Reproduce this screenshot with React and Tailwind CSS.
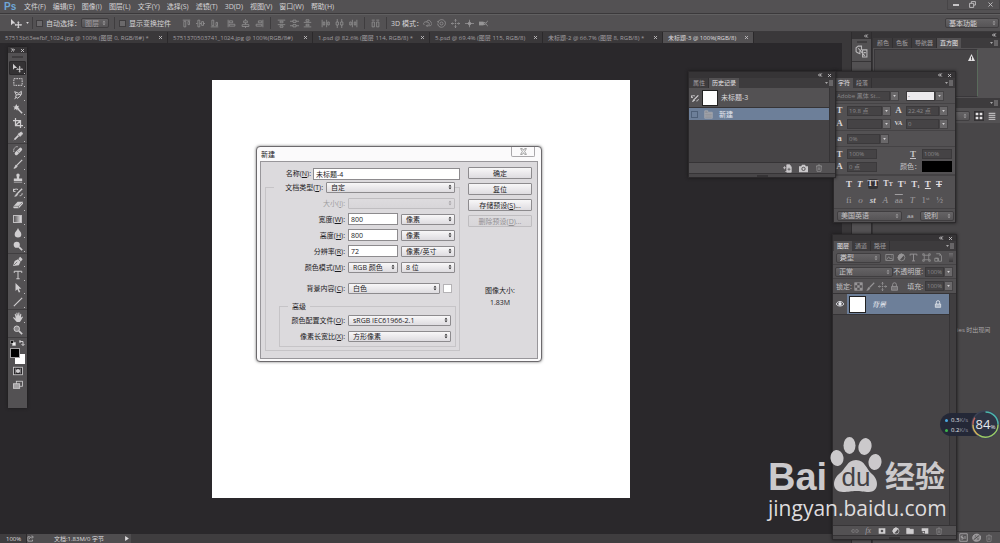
import { useState } from "react";
import { ChevronsLeft, ChevronsRight, X } from "lucide-react";

const MENUS = [
  "文件(F)",
  "编辑(E)",
  "图像(I)",
  "图层(L)",
  "文字(Y)",
  "选择(S)",
  "滤镜(T)",
  "3D(D)",
  "视图(V)",
  "窗口(W)",
  "帮助(H)",
];

const TABS = [
  { name: "57513b63eefbf_1024.jpg @ 100% (图层 0, RGB/8#) *", width: "w-[168px]" },
  { name: "5751370503741_1024.jpg @ 100%(RGB/8#)", width: "w-[145px]" },
  { name: "1.psd @ 82.6% (图层 114, RGB/8) *", width: "w-[117px]" },
  { name: "5.psd @ 69.4% (图层 115, RGB/8)", width: "w-[113px]" },
  { name: "未标题-2 @ 66.7% (图层 8, RGB/8) *", width: "w-[120px]" },
  { name: "未标题-3 @ 100%(RGB/8)", width: "w-[91px]", active: true },
];

// All line icons share a 12x12 box
const Icon = ({ children, className = "size-[11px]" }) => (
  <svg
    viewBox="0 0 12 12"
    fill="none"
    stroke="currentColor"
    strokeWidth="1"
    className={`shrink-0 ${className}`}
  >
    {children}
  </svg>
);

const ICONS = {
  move: (
    <>
      <path d="M0 1v7l2-2h3z" fill="currentColor" stroke="none" />
      <path d="M8 4v7M4.500 7.500h7" strokeWidth="1.200" />
      <path d="M7 5l1-1 1 1M7 10l1 1 1-1M5.500 6.500l-1 1 1 1M10.500 6.500l1 1-1 1" strokeWidth=".8" />
    </>
  ),
  marquee: <rect x="1" y="2" width="10" height="8" strokeWidth="1.200" strokeDasharray="2 1" />,
  lasso: <path d="M2 2l2 4 6-1V1.500L7 4 2 2zM4 6l-1 2 2 2 3-2 2-3M4 8l-2 3" strokeWidth="1.200" />,
  wand: (
    <>
      <path d="M6 6l5 5" strokeWidth="1.800" />
      <path d="M4 0l1 2.500L7.500 2 6 4l2 1.500-2.500.5L5 8 3.500 6 1 7l1-2.500L0 3h2.500z" fill="currentColor" stroke="none" />
    </>
  ),
  crop: <path d="M3 0v9h9M0 3h9v9M3 9l6-6" strokeWidth="1.500" />,
  eyedropper: (
    <>
      <path d="M2 10l4.500-4.500" strokeWidth="2" />
      <path d="M1 11l1-1" />
      <path d="M7 3l2 2M6 4l2.500 2.500L11 4c1-1 0-3-1.500-2.500z" fill="currentColor" />
    </>
  ),
  healing: (
    <>
      <path d="M4 9l5-5" strokeWidth="4" strokeLinecap="round" />
      <path d="M1 7C0 3 3 0 6 1" strokeDasharray="1.500 1" strokeWidth="1.200" />
      <path d="M5 6l2 2M7 5l1 1" stroke="#555" strokeWidth=".7" />
    </>
  ),
  brush: (
    <>
      <path d="M5 7l6-6" strokeWidth="1.500" />
      <path d="M1 11c2 0 1-3 3-4l1 1c0 2-2 3-4 3z" fill="currentColor" />
    </>
  ),
  stamp: (
    <path
      d="M4 2.500a2 2 0 014 0c0 1-.7 2-.7 4H11v3H1v-3h3.700C4.700 4.500 4 3.500 4 2.500zM1 10.500h10v1H1z"
      fill="currentColor"
      stroke="none"
    />
  ),
  history: (
    <>
      <path d="M5 8l6-6" strokeWidth="1.600" />
      <path d="M2 11c2 0 1-2 2.500-3l1 1c0 1-1.500 2-3.500 2z" fill="currentColor" />
      <path d="M0 5c1-2.500 4-3 6-2M1 2l-1 3 3 .5M8 10.500c2 0 3-1 3-3" strokeWidth="1.200" />
    </>
  ),
  eraser: (
    <>
      <path d="M0 8l5.500-6H12v2.500L7 10H1z" fill="currentColor" stroke="none" />
      <path d="M0 7.500h6.500L11.500 3M6.500 7.500V10" stroke="#555" strokeWidth=".7" />
    </>
  ),
  drop: <path d="M6 0c1 3 4 4.500 4 7.500a4 4 0 01-8 0C2 4.500 5 3 6 0z" fill="currentColor" stroke="none" />,
  dodge: (
    <>
      <circle cx="4.500" cy="4.500" r="3.700" fill="currentColor" stroke="none" />
      <path d="M7 7l4 4" strokeWidth="2" />
    </>
  ),
  pen: (
    <>
      <path d="M0 12l2-6 4-2 3 3-2 4z" fill="currentColor" stroke="none" />
      <path d="M7 3l3 3M8 1.500L11 4.500" strokeWidth="1.800" />
      <path d="M1 11l4-4" stroke="#555" strokeWidth=".8" />
    </>
  ),
  type: <path d="M1.500 3.500v-2h9v2M6 1.500v9M4 10.500h4" strokeWidth="1.200" />,
  arrow: <path d="M3 0v9.500l2.200-2L7 11.500l1.700-.8L7 7h3z" fill="currentColor" stroke="none" />,
  line: <path d="M1 11L11 1" strokeWidth="1.400" />,
  hand: (
    <path
      d="M3 6L2 2.500l1-.5 1.500 3L4 1h1.200L6 4.500 6.500.5h1.200V5L9 2l1 .5L9.500 7l1.500-1.500 1 .5-3 5-1 1H4.500L0 7l1-1 2 2z"
      fill="currentColor"
      stroke="none"
    />
  ),
  zoom: (
    <>
      <circle cx="4.500" cy="4.500" r="3.300" fill="#8d8b8d" strokeWidth="1.200" />
      <path d="M7 7l4 4" strokeWidth="2" />
    </>
  ),
  mask: (
    <>
      <rect x="0.500" y="1.500" width="11" height="9" fill="#2a282b" />
      <circle cx="6" cy="6" r="2.500" fill="currentColor" stroke="none" />
      <path d="M3 3v6M9 3v6" strokeWidth=".6" />
    </>
  ),
  screen: (
    <>
      <rect x="4" y="1.500" width="7.500" height="6" />
      <rect x="0.500" y="4.500" width="7.500" height="5.500" fill="#a3a1a3" />
    </>
  ),
  alignTop: <path d="M1 1.500h10M2.500 3v7.500h2.500V3zM8 3v4.500h2V3z" />,
  alignMiddle: <path d="M0 6h2M5 6h2M10 6h2M2.500 1.500v9H5v-9zM7.500 3.500v5h2.500v-5z" />,
  alignBottom: <path d="M1 10.500h10M2.500 1.500V9H5V1.500zM8 4.500V9h2V4.500z" />,
  alignLeft: <path d="M1.500 1v10M3 2.500v2.500h4.500V2.500zM3 7v2.500h7.500V7z" />,
  alignCenter: <path d="M6 0v2M6 5v2M6 10v2M3.500 2.500h5v2.500h-5zM1.500 7.500h9V10h-9z" />,
  alignRight: <path d="M10.500 1v10M4.500 2.500v2.500H9V2.500zM1.500 7v2.500H9V7z" />,
  distTop: <path d="M1 1.500h10M4 3v2h4V3zM1 7.500h10M4 9v2h4V9z" />,
  distMiddle: <path d="M0 3h4M8 3h4M0 9h4M8 9h4M4 1.500v3h4v-3zM4 7.500v3h4v-3z" />,
  distBottom: <path d="M1 4.500h10M4 1v2h4V1zM1 10.500h10M4 7v2h4V7z" />,
  distLeft: <path d="M1.500 1v10M3 4v4h2V4zM7.500 1v10M9 4v4h2V4z" />,
  distCenter: <path d="M3 0v4M3 8v4M9 0v4M9 8v4M1.500 4v4h3V4zM7.500 4v4h3V4z" />,
  distRight: <path d="M4.500 1v10M1 4v4h2V4zM10.500 1v10M7 4v4h2V4z" />,
  columns: <path d="M1 1.500h4M7 1.500h4M1.500 4v6.500h3V4zM7.500 4v6.500h3V4z" />,
  orbit: <path d="M2 8C-1 6 2 3 5 4c0-3 5-3 5 0 3 1 2 5-1 5H5M5 4c3 0 4 2 3 4M6 7.500L4.500 9 6 10.500" />,
  roll: (
    <>
      <circle cx="6" cy="6" r="2" />
      <path d="M2 3c2-3 7-3 9 1 1 4-2 7-5 7S1 9 1 6M0 4l2-1v2" />
    </>
  ),
  pan: <path d="M6 0v4M6 8v4M0 6h4M8 6h4M4.500 2L6 .5 7.500 2M4.500 10L6 11.500 7.500 10M2 4.500L.5 6 2 7.500M10 4.500L11.500 6 10 7.500M6 5v2M5 6h2" />,
  slide: (
    <>
      <path d="M6 1v10M0 6h12" />
      <path d="M6 3.500L8.500 6 6 8.500 3.500 6z" fill="currentColor" />
    </>
  ),
  camera3d: (
    <>
      <path d="M0 4h6v4H0z" fill="currentColor" />
      <path d="M6 6l2-2v4zM12 2L9 6l3 4" />
    </>
  ),
  trash: <path d="M1.500 3h9M4.500 3V1.500h3V3M2.500 3l.5 8h6l.5-8M5 5v4M7 5v4" />,
  camera: (
    <>
      <path d="M0 3h3l1-2h4l1 2h3v8H0z" fill="currentColor" stroke="none" />
      <circle cx="6" cy="6.500" r="2.200" stroke="#535153" strokeWidth="1.300" />
    </>
  ),
  newDoc: (
    <>
      <path d="M5 1h4l2 3v7H5z" fill="currentColor" />
      <path d="M0 5h4M2 3v4M3 10h2" />
      <path d="M8 5v4M6 7h4" stroke="#535153" />
    </>
  ),
  folder: <path d="M1 2h4l1 1.500h5V10H1z" fill="currentColor" />,
  newLayer: (
    <>
      <path d="M1 2h10v8H6V6H1z" fill="currentColor" stroke="none" />
      <path d="M1 7h4v3z" fill="currentColor" stroke="none" />
    </>
  ),
  adjust: (
    <>
      <circle cx="6" cy="6" r="4.500" />
      <path d="M9 2.500a4.500 4.500 0 00-6 7z" fill="currentColor" />
    </>
  ),
  addMask: <path d="M1 2h10v8H1zM6 4a2 2 0 100 4 2 2 0 000-4z" fill="currentColor" stroke="none" fillRule="evenodd" />,
  link: <path d="M5 4H3a2 2 0 000 4h2M7 4h2a2 2 0 010 4H7M4 6h4" />,
  image: <path d="M1 2h10v8H1zM2 9l3-4 2 3 1.500-1.500L10 9M8 4h1" />,
  shape: <path d="M3 3h6v6H3zM1 1h2v2H1zM9 1h2v2H9zM1 9h2v2H1zM9 9h2v2H9z" />,
  smart: <path d="M3 1h5l2 3v7H6V7H2M1 7h4v4H1zM8 1v3" />,
  lock: (
    <>
      <path d="M3.500 6V3.500a2.500 2.500 0 015 0V6" strokeWidth="1.200" />
      <path d="M2 6h8v5H2z" fill="currentColor" fillOpacity=".5" />
    </>
  ),
  checker: (
    <>
      <rect x="1" y="1" width="10" height="10" />
      <path d="M1 1h3.300v3.300H1zM7.600 1H11v3.300H7.600zM4.300 4.300h3.300v3.300H4.300zM1 7.600h3.300V11H1zM7.600 7.600H11V11H7.600z" fill="currentColor" stroke="none" />
    </>
  ),
  eye: (
    <>
      <path d="M0 6c3-5 9-5 12 0-3 4-9 4-12 0z" strokeWidth="1.300" />
      <circle cx="6" cy="5.800" r="2" fill="currentColor" />
    </>
  ),
  search: (
    <>
      <circle cx="7" cy="5" r="3.800" strokeWidth="1.500" />
      <path d="M4 8l-3.500 3.500" strokeWidth="2" />
    </>
  ),
  actions: (
    <>
      <path d="M1 6V2.500L3 1h3v3L4.500 6v2L2 7z" />
      <path d="M3 3l6 7M7 4.500h4V11H7zM8 7h2" />
    </>
  ),
  palette: (
    <>
      <path d="M1 6C1 1 9 0 11 4c2 4-1 7-5 7S1 9 1 6z" fill="currentColor" fillOpacity=".6" />
      <path d="M2 9l8-6M4 4h1M7 8h2" stroke="#3a383a" />
    </>
  ),
  si: <path d="M1 1h10v10H1zM5.500 4H3v2h2.500v2H3M8 4v4" />,
  share: <path d="M5 3H1.500v7.500h8V8M4 7c0-3 2-3.500 5-3.500M8 1l3 2.500L8 6" />,
};

const TOOL_GROUPS = [
  { height: "h-[83px]", tools: ["move", "marquee", "lasso", "wand", "crop", "eyedropper"] },
  { height: "h-[110px]", tools: ["healing", "brush", "stamp", "history", "eraser", "gradient", "drop", "dodge"] },
  { height: "h-[56px]", tools: ["pen", "type", "arrow", "line"] },
  { height: "h-[28px]", tools: ["hand", "zoom"] },
];

const UpDown = ({ className = "" }) => (
  <svg viewBox="0 0 4 6" fill="currentColor" className={`pointer-events-none absolute top-1/2 right-[3px] h-[5px] w-[4px] -translate-y-1/2 ${className}`}>
    <path d="M2 0l1.700 2.300H.3zM2 6L.3 3.700h3.400z" />
  </svg>
);

const DarkSelect = ({ label, value, className = "" }) => (
  <span className={`relative block h-[10px] shrink-0 ${className}`}>
    <select
      aria-label={label}
      className="block size-full appearance-none rounded-[2px] border border-[#403e40] bg-linear-to-b from-[#656365] to-[#565456] pl-[3px] leading-none text-inherit"
    >
      <option>{value}</option>
    </select>
    <UpDown className="text-[#9a989a]" />
  </span>
);

const LightSelect = ({ id, label, value, disabled, className = "" }) => (
  <span className={`relative block h-[11px] shrink-0 ${className}`}>
    <select
      id={id}
      aria-label={label}
      disabled={disabled}
      className="block size-full appearance-none rounded-[1px] border border-[#8d8b8e] bg-linear-to-b from-[#f8f7f8] to-[#dedce0] pl-1 leading-none text-[#1c1b1d] disabled:border-[#bfbdc0] disabled:from-[#dddbde] disabled:to-[#d8d6d9]"
    >
      <option>{value}</option>
    </select>
    <UpDown className={disabled ? "text-[#a4a2a5]" : "text-[#2c2b2d]"} />
  </span>
);

// Text box with a drop-down button on its right
const Combo = ({ label, value, className = "", light, arrow = true }) => (
  <span className={`flex h-[10px] shrink-0 text-[6px] ${className}`}>
    <input
      aria-label={label}
      defaultValue={value}
      className={`block h-full w-0 flex-1 border border-[#3b393b] px-px leading-none ${light ? "bg-[#eceaed] text-[#555]" : "bg-[#454345] text-[#8a888a]"}`}
    />
    {arrow && (
      <button aria-label={`${label} 选项`} className="flex w-[9px] items-center justify-center border border-[#454345] bg-[#6a686a]">
        <svg viewBox="0 0 4 3" className="h-[2px] w-[3px] fill-[#d2d0d2]">
          <path d="M0 0h4L2 3z" />
        </svg>
      </button>
    )}
  </span>
);

const Panel = ({ tabs, active, className, children }) => (
  <section
    className={`absolute flex flex-col border border-[#2b292b] bg-[#535153] text-[7px] leading-none text-[#c4c2c4] shadow-[0_0_3px_#1a181a] ${className}`}
  >
    <PanelTop />
    <PanelTabs tabs={tabs} active={active} />
    {children}
  </section>
);

const PanelTop = ({ close = true }) => (
  <div className="flex h-[6px] shrink-0 items-center justify-end gap-1 bg-[#363436] pr-[3px] text-[#c9c7c9]">
    <ChevronsLeft size={6} strokeWidth={4} />
    {close && <X size={5} strokeWidth={4} />}
  </div>
);

const PanelTabs = ({ tabs, active }) => (
  <div className="flex h-[10px] shrink-0 items-stretch bg-[#3d3b3d] pl-px text-[6px]">
    {tabs.map((tab) => (
      <button
        key={tab}
        className={`px-[3px] leading-none whitespace-nowrap ${tab === active ? "bg-[#535153] text-[#e6e4e6]" : "border-r border-[#323032] text-[#a09ea0]"}`}
      >
        {tab}
      </button>
    ))}
    <svg viewBox="0 0 8 6" className="mr-[2px] ml-auto h-[6px] w-[8px] self-center" stroke="#a9a7a9">
      <path d="M0 2h3L1.500 4z" fill="#a9a7a9" stroke="none" />
      <path d="M4 1h4M4 3h4M4 5h4" strokeWidth=".8" />
    </svg>
  </div>
);

const Sep = () => <span className="h-3 w-px shrink-0 bg-[#3f3d3f]" />;

const IconRow = ({ names, className = "" }) => (
  <div className={`flex items-center text-[#979597] ${className}`}>
    {names.map((name) => (
      <button key={name} aria-label={name} className="block">
        <Icon className="size-[9px]">{ICONS[name]}</Icon>
      </button>
    ))}
  </div>
);

const Header = () => (
  <header className="shrink-0 bg-[#535153] text-[7px] leading-none text-[#d6d4d6]">
    <div className="flex h-[14px] items-center border-b border-[#3b393b]">
      <span className="w-[24px] pl-1 font-['Liberation_Sans',sans-serif] text-[10px] font-bold text-[#6fa7d6]">Ps</span>
      <nav className="flex gap-[7px]">
        {MENUS.map((item) => (
          <button key={item} className="leading-none whitespace-nowrap">
            {item}
          </button>
        ))}
      </nav>
      <div className="ml-auto flex h-[10px] w-[53px] items-center justify-around self-start border border-t-0 border-[#474547] text-[#c6c4c6]">
        <button aria-label="最小化" className="h-[2px] w-[6px] bg-[#c6c4c6]" />
        <button aria-label="还原">
          <Icon className="size-[7px]">
            <path d="M4 4V1h7v6H8M1 4h7v7H1z" strokeWidth="1.500" />
          </Icon>
        </button>
        <button aria-label="关闭">
          <X size={7} strokeWidth={3} />
        </button>
      </div>
    </div>

    <div className="flex h-[18px] items-center border-y border-t-[#616061] border-b-[#3b393b]">
      <span className="flex w-[32px] items-center gap-1 pl-[11px]">
        <Icon>{ICONS.move}</Icon>
        <svg viewBox="0 0 4 3" className="h-[2px] w-[3px] fill-current">
          <path d="M0 0h4L2 3z" />
        </svg>
      </span>
      <Sep />
      <label className="ml-[3px] flex w-[45px] items-center gap-[3px] whitespace-nowrap">
        <input type="checkbox" className="size-[7px] appearance-none border border-[#3f3d3f] bg-[#6b696b]" />
        自动选择：
      </label>
      <DarkSelect label="自动选择" value="图层" className="w-[28px] text-[#a09ea0]" />
      <span className="w-[5px]" />
      <Sep />
      <label className="ml-[4px] flex w-[57px] items-center gap-[3px] whitespace-nowrap">
        <input type="checkbox" className="size-[7px] appearance-none border border-[#3f3d3f] bg-[#6b696b]" />
        显示变换控件
      </label>
      <IconRow names={["alignTop", "alignMiddle", "alignBottom"]} className="ml-[6px] gap-[5px]" />
      <IconRow names={["alignLeft", "alignCenter", "alignRight"]} className="mr-[6px] ml-[8px] gap-[5px]" />
      <Sep />
      <IconRow names={["distTop", "distMiddle", "distBottom"]} className="ml-[6px] gap-[4px]" />
      <IconRow names={["distLeft", "distCenter", "distRight"]} className="mr-[6px] ml-[9px] gap-[5px]" />
      <Sep />
      <IconRow names={["columns"]} className="mx-[6px]" />
      <Sep />
      <span className="ml-[4px] w-[32px] whitespace-nowrap">3D 模式：</span>
      <IconRow names={["orbit", "roll", "pan", "slide", "camera3d"]} className="gap-[5px]" />
      <DarkSelect label="工作区" value="基本功能" className="mr-px ml-auto w-[54px]" />
    </div>
  </header>
);

const DocumentTabs = () => (
  <div className="flex h-[11px] shrink-0 items-stretch bg-[#3a383a] text-[6px] leading-none">
    {TABS.map((tab) => (
      <div
        key={tab.name}
        className={`flex shrink-0 items-center justify-between border-r border-[#2b292b] pr-[4px] pl-[5px] ${tab.width} ${tab.active ? "bg-[#535153] text-[#dddbdd]" : "text-[#a19fa1]"}`}
      >
        <button className="leading-none whitespace-nowrap">{tab.name}</button>
        <button aria-label="关闭标签" className="text-[#c6c4c6]">
          <X size={5} strokeWidth={4} />
        </button>
      </div>
    ))}
  </div>
);

const Toolbox = () => {
  const [tool, setTool] = useState("move");

  return (
    <aside className="absolute top-[4px] left-[8px] flex h-[361px] w-[19px] flex-col bg-[#535153] text-[#d0ced0] shadow-[0_0_3px_#1a181a]">
      <div className="flex h-[6px] items-center justify-around bg-[#363436]">
        <ChevronsRight size={6} strokeWidth={4} />
        <X size={5} strokeWidth={4} />
      </div>
      <span className="mx-auto my-[3px] h-[2px] w-[11px] bg-[#3f3d3f]" />
      {TOOL_GROUPS.map((group) => (
        <div key={group.height} className={`flex shrink-0 flex-col border-b border-[#403e40] px-px ${group.height}`}>
          {group.tools.map((name) => (
            <button
              key={name}
              aria-label={name}
              onClick={() => setTool(name)}
              className={`relative flex flex-1 items-center justify-center rounded-[2px] ${name === tool ? "bg-[#343234] ring-1 ring-[#2b292b] ring-inset" : ""}`}
            >
              {name === "gradient" ? (
                <span className="h-[8px] w-[9px] border border-[#c0bec0] bg-linear-to-r from-[#5a585a] to-[#e0dee0]" />
              ) : (
                <Icon className="size-[10px]">{ICONS[name]}</Icon>
              )}
              {name !== "zoom" && <span className="absolute right-px bottom-px size-px bg-[#bcbabc]" />}
            </button>
          ))}
        </div>
      ))}
      <div className="flex h-[10px] shrink-0 items-center justify-around">
        <Icon className="size-[6px]">
          <path d="M1 1h6v6H1z" fill="#111" />
          <path d="M7 5h4v6H5V7" fill="#eee" />
        </Icon>
        <Icon className="size-[6px]">
          <path d="M1 3h7v8M3 0L0 3l3 3M5 8l3 3 3-3" strokeWidth="2" />
        </Icon>
      </div>
      {/* Foreground and background colours overlap */}
      <div className="relative mx-[2px] h-[17px] shrink-0">
        <span className="absolute right-0 bottom-px size-[10px] bg-white" />
        <span className="absolute top-0 left-0 size-[10px] border border-[#a3a1a3] bg-black" />
      </div>
      <div className="flex flex-col items-center gap-[4px] pt-px">
        <Icon className="size-[10px]">{ICONS.mask}</Icon>
        <Icon className="size-[10px]">{ICONS.screen}</Icon>
      </div>
    </aside>
  );
};

const Row = ({ id, text, hotkey, muted, wide = "w-[79px]", children }) => (
  <div className="flex h-4 items-center gap-[3px]">
    <label htmlFor={id} className={`shrink-0 text-right whitespace-nowrap ${wide} ${muted ? "text-[#a09ea1]" : ""}`}>
      {text}(<u>{hotkey}</u>):
    </label>
    {children}
  </div>
);

const LightInput = ({ id, value, className }) => (
  <input
    id={id}
    defaultValue={value}
    className={`block h-[12px] border border-[#8d8b8e] bg-white px-[2px] leading-none text-[#1c1b1d] ${className}`}
  />
);

const LightButton = ({ children, className = "", disabled }) => (
  <button
    type="button"
    disabled={disabled}
    className={`h-[12px] rounded-[1px] border border-[#8d8b8e] bg-linear-to-b from-[#f8f7f8] to-[#dedce0] leading-none disabled:border-[#bfbdc0] disabled:from-[#dddbde] disabled:to-[#d8d6d9] disabled:text-[#929093] ${className}`}
  >
    {children}
  </button>
);

const NewDocumentDialog = () => (
  <div
    role="dialog"
    aria-label="新建"
    className="absolute top-[146px] left-[256px] flex w-[286px] flex-col rounded-[4px] border border-[#6c6a6d] bg-[#fbfafb] px-[3px] pb-[2px] text-[7px] leading-none text-[#1c1b1d] shadow-[0_0_3px_#777]"
  >
    <div className="flex h-[14px] items-center justify-between pr-[3px] pl-px">
      <h2>新建</h2>
      <button
        aria-label="关闭"
        className="flex h-[10px] w-[24px] items-center justify-center self-start rounded-b-[2px] border border-t-0 border-[#a9a7aa] text-[#666]"
      >
        <Icon className="size-[7px]">
          <path d="M1 1h3l2 3 2-3h3L8 6l3 5H8L6 8l-2 3H1l3-5z" />
        </Icon>
      </button>
    </div>
    <form className="flex h-[198px] gap-2 border border-[#98969a] bg-[#dcdadd] pt-[5px] pr-[5px] pl-[4px]">
      <div className="w-[195px] shrink-0">
        <div className="flex h-[13px] items-center justify-end gap-[2px]">
          <label htmlFor="doc-name">
            名称(<u>N</u>):
          </label>
          <LightInput id="doc-name" value="未标题-4" className="w-[147px]" />
        </div>
        <fieldset className="w-full min-w-0 border border-[#c6c4c7] pb-[3px]">
          <legend className="mb-px ml-[8px] flex h-[14px] w-[181px] items-center justify-end gap-[3px]">
            <label htmlFor="doc-type">
              文档类型(<u>T</u>):
            </label>
            <LightSelect id="doc-type" value="自定" className="w-[129px]" />
          </legend>
          <Row id="doc-size" text="大小" hotkey="I" muted>
            <LightSelect id="doc-size" value="" disabled className="w-[107px]" />
          </Row>
          <Row id="doc-width" text="宽度" hotkey="W">
            <LightInput id="doc-width" value="800" className="w-[50px]" />
            <LightSelect label="宽度单位" value="像素" className="w-[54px]" />
          </Row>
          <Row id="doc-height" text="高度" hotkey="H">
            <LightInput id="doc-height" value="800" className="w-[50px]" />
            <LightSelect label="高度单位" value="像素" className="w-[54px]" />
          </Row>
          <Row id="doc-res" text="分辨率" hotkey="R">
            <LightInput id="doc-res" value="72" className="w-[50px]" />
            <LightSelect label="分辨率单位" value="像素/英寸" className="w-[54px]" />
          </Row>
          <Row id="doc-mode" text="颜色模式" hotkey="M">
            <LightSelect id="doc-mode" value="RGB 颜色" className="w-[50px]" />
            <LightSelect label="位深度" value="8 位" className="w-[54px]" />
          </Row>
          <div className="mt-[5px]">
            <Row id="doc-bg" text="背景内容" hotkey="C">
              <LightSelect id="doc-bg" value="白色" className="w-[92px]" />
              <button type="button" aria-label="背景颜色" className="size-[9px] border border-[#b5b3b6] bg-white" />
            </Row>
          </div>
          <fieldset className="mt-[6px] mr-[3px] ml-[13px] min-w-0 border border-[#c6c4c7] pb-[2px]">
            <legend className="mb-px ml-2 px-1 py-px">高级</legend>
            <Row id="doc-profile" text="颜色配置文件" hotkey="O" wide="w-[65px]">
              <LightSelect id="doc-profile" value="sRGB IEC61966-2.1" className="w-[103px]" />
            </Row>
            <Row id="doc-ratio" text="像素长宽比" hotkey="X" wide="w-[65px]">
              <LightSelect id="doc-ratio" value="方形像素" className="w-[103px]" />
            </Row>
          </fieldset>
        </fieldset>
      </div>
      <div className="flex flex-1 flex-col gap-[4px]">
        <LightButton className="border-[#5d5b5e]">确定</LightButton>
        <LightButton>复位</LightButton>
        <LightButton>
          存储预设(<u>S</u>)...
        </LightButton>
        <LightButton disabled>
          删除预设(<u>D</u>)...
        </LightButton>
        <p className="mt-[54px] text-center leading-[12px]">
          图像大小:
          <br />
          1.83M
        </p>
      </div>
    </form>
  </div>
);

const HistoryPanel = () => (
  <Panel tabs={["属性", "历史记录"]} active="历史记录" className="top-[71px] right-[164px] h-[107px] w-[148px]">
    <div className="flex flex-1 bg-[#464446]">
      <ul className="flex-1">
        <li className="flex h-[20px] items-center gap-[3px] border-b border-[#363436] bg-[#535153] pl-[2px] text-[#dddbdd]">
          <Icon className="size-[8px]">{ICONS.history}</Icon>
          <span className="size-[16px] border border-[#222] bg-white" />
          未标题-3
        </li>
        <li className="flex h-[12px] items-center bg-[#6d7f99] text-[#e6e8ee]">
          <span className="ml-[2px] size-[7px] border border-[#4f6078]" />
          <Icon className="mr-[6px] ml-[6px] size-[9px] text-[#a9abb1]">
            <path d="M1 11V1h4v2h6v8zM1 5h10M1 8h10" fill="#8f9198" />
          </Icon>
          新建
        </li>
      </ul>
      <div className="w-[6px] border-l border-[#363436] bg-[#403e40]" />
    </div>
    <div className="flex h-[11px] shrink-0 items-center justify-end gap-[7px] border-t border-[#363436] pr-[12px] text-[#c9c7c9]">
      <Icon className="size-[9px]">{ICONS.newDoc}</Icon>
      <Icon className="size-[9px]">{ICONS.camera}</Icon>
      <Icon className="size-[8px] text-[#9c9a9c]">{ICONS.trash}</Icon>
    </div>
    <Grip />
  </Panel>
);

const Grip = () => (
  <div className="flex h-[4px] shrink-0 items-center justify-center border-t border-[#363436] bg-[#484648]">
    <span className="h-[2px] w-[11px] bg-[#363436]" />
  </div>
);

const CHAR_ROW = "flex shrink-0 items-center border-b border-[#454345] pl-px";

const CharacterPanel = () => (
  <Panel tabs={["字符", "段落"]} active="字符" className="top-[71px] right-[44px] h-[152px] w-[123px]">
    <div className={`${CHAR_ROW} h-[16px] gap-[7px]`}>
      <Combo label="字体" value="Adobe 黑体 St..." className="w-[64px]" />
      <Combo label="字形" value="-" light className="w-[38px]" />
    </div>
    <div className={`${CHAR_ROW} h-[27px] flex-wrap content-center gap-x-[3px] gap-y-[3px]`}>
      <Glyph>T</Glyph>
      <Combo label="字号" value="19.8 点" className="w-[44px]" />
      <Glyph>A</Glyph>
      <Combo label="行距" value="22.42 点" className="w-[42px]" />
      <Glyph>A</Glyph>
      <Combo label="字距微调" value="" className="w-[44px]" />
      <Glyph small>VA</Glyph>
      <Combo label="字距" value="0" className="w-[42px]" />
    </div>
    <div className={`${CHAR_ROW} h-[16px] gap-[3px]`}>
      <Glyph>a</Glyph>
      <Combo label="比例间距" value="0%" className="w-[42px]" />
    </div>
    <div className={`${CHAR_ROW} h-[28px] flex-wrap content-center gap-x-[3px] gap-y-[2px]`}>
      <Glyph>T</Glyph>
      <Combo label="垂直缩放" value="100%" arrow={false} className="w-[30px]" />
      <span className="w-[39px] pr-[3px] text-right font-['Liberation_Serif',serif] text-[9px] font-bold underline">T</span>
      <Combo label="水平缩放" value="100%" arrow={false} className="w-[30px]" />
      <Glyph>A</Glyph>
      <Combo label="基线偏移" value="0 点" arrow={false} className="w-[30px]" />
      <span className="w-[39px] pl-[20px] whitespace-nowrap">颜色：</span>
      <button aria-label="文字颜色" className="h-[11px] w-[30px] bg-black" />
    </div>
    <div className="flex h-[17px] shrink-0 items-center justify-between border-t border-[#454345] pr-[13px] pl-[12px] font-['Liberation_Serif',serif] text-[9px] font-bold text-[#e0dee0]">
      <span>T</span>
      <span className="italic">T</span>
      <span className="rounded-[2px] bg-[#343234] py-px text-[8px]">TT</span>
      <span className="text-[8px]">
        T<span className="text-[6px]">T</span>
      </span>
      <span>
        T<sup className="text-[5px]">1</sup>
      </span>
      <span>
        T<sub className="text-[5px]">1</sub>
      </span>
      <span className="underline">T</span>
      <span className="line-through">T</span>
    </div>
    <div className="flex h-[17px] shrink-0 items-center justify-between border-b border-[#454345] pr-[12px] pl-[12px] font-['Liberation_Serif',serif] text-[9px] text-[#a09ea0]">
      <span>fi</span>
      <span className="italic">o</span>
      <span className="font-bold text-[#d0ced0] italic">st</span>
      <span className="italic">A</span>
      <span className="overline">aa</span>
      <span className="italic">T</span>
      <span>
        1<sup className="text-[5px]">st</sup>
      </span>
      <span>½</span>
    </div>
    <div className="flex flex-1 items-center gap-[5px] pl-[3px]">
      <DarkSelect label="语言" value="美国英语" className="w-[65px]" />
      <span className="w-[8px] text-[6px]">aa</span>
      <DarkSelect label="消除锯齿" value="锐利" className="w-[34px]" />
    </div>
  </Panel>
);

const Glyph = ({ children, small }) => (
  <span
    className={`w-[9px] shrink-0 text-center font-['Liberation_Serif',serif] leading-[9px] font-bold text-[#d6d4d6] ${small ? "text-[6px]" : "text-[9px]"}`}
  >
    {children}
  </span>
);

const LayersPanel = () => (
  <Panel tabs={["图层", "通道", "路径"]} active="图层" className="top-[234px] right-[43px] bottom-[3px] w-[125px]">
    <div className="flex h-[14px] shrink-0 items-center border-b border-[#454345] pr-[3px] pl-[3px]">
      <span className="relative">
        <DarkSelect label="图层筛选" value="　类型" className="w-[45px]" />
        <Icon className="pointer-events-none absolute top-[2px] left-[4px] size-[6px]">{ICONS.search}</Icon>
      </span>
      <IconRow names={["image", "adjust", "type", "shape", "smart"]} className="ml-[2px] flex-1 justify-around pr-1" />
      <span className="h-[9px] w-[4px] bg-linear-to-b from-[#6f6d6f] to-[#3b393b]" />
    </div>
    <div className="flex h-[14px] shrink-0 items-center border-b border-[#454345] pr-[3px] pl-[2px]">
      <DarkSelect label="混合模式" value="正常" className="w-[58px]" />
      <span className="ml-auto whitespace-nowrap">不透明度:</span>
      <Combo label="不透明度" value="100%" className="ml-[2px] w-[28px]" />
    </div>
    <div className="flex h-[14px] shrink-0 items-center pr-[3px] pl-[3px]">
      <span className="w-[18px] whitespace-nowrap">锁定:</span>
      <IconRow names={["checker", "brush", "pan", "lock"]} className="gap-[3px]" />
      <span className="ml-auto">填充:</span>
      <Combo label="填充" value="100%" className="ml-[2px] w-[28px]" />
    </div>
    <div className="flex flex-1 border-t border-[#363436] bg-[#464446]">
      <ul className="flex-1">
        <li className="flex h-[21px] items-center border-b border-[#363436] bg-[#6d7f99] text-[#eceef3]">
          <button aria-label="图层可见性" className="flex h-full w-[14px] items-center justify-center bg-[#535153]">
            <Icon className="size-[8px]">{ICONS.eye}</Icon>
          </button>
          <span className="mx-[2px] size-[17px] border border-[#222] bg-white" />
          <span className="ml-1 italic">背景</span>
          <Icon className="mr-[7px] ml-auto size-[8px]">{ICONS.lock}</Icon>
        </li>
      </ul>
      <div className="w-[7px] border-l border-[#363436] bg-[#403e40]" />
    </div>
    <div className="flex h-[10px] shrink-0 items-center justify-between border-t border-[#363436] pr-[13px] pl-[18px] text-[#d0ced0]">
      <Icon className="size-[8px] text-[#8b898b]">{ICONS.link}</Icon>
      <span className="font-['Liberation_Serif',serif] text-[8px] text-[#a09ea0] italic">fx</span>
      {["addMask", "adjust", "folder", "newLayer"].map((name) => (
        <Icon key={name} className="size-[8px]">
          {ICONS[name]}
        </Icon>
      ))}
      <Icon className="size-[8px] text-[#8b898b]">{ICONS.trash}</Icon>
    </div>
    <Grip />
  </Panel>
);

const Dock = () => (
  <aside className="flex w-[149px] shrink-0 bg-[#363436] text-[7px] leading-none text-[#b9b7b9]">
    <div className="flex w-[21px] flex-col border-x border-[#2e2c2e]">
      <div className="flex h-[7px] items-center justify-end pr-[2px]">
        <ChevronsLeft size={6} strokeWidth={4} />
      </div>
      <div className="flex h-[22px] flex-col items-center bg-[#535153]">
        <span className="my-[2px] h-[2px] w-[10px] bg-[#3f3d3f]" />
        <Icon className="size-[13px]">{ICONS.actions}</Icon>
      </div>
      <div className="mt-px flex-1 bg-[#535153]" />
    </div>
    <div className="ml-px flex flex-1 flex-col">
      <PanelTop close={false} />
      <PanelTabs tabs={["颜色", "色板", "导航器", "直方图"]} active="直方图" />
      <div className="h-[50px] bg-[#535153] py-px pl-px">
        <div className="flex h-full w-[104px] justify-end border border-[#39373a] border-r-[#5a6b5c] bg-[#464446] pt-[4px] pr-[2px]">
          <svg viewBox="0 0 8 8" className="size-[7px]">
            <path d="M4 0l4 8H0z" fill="#e4e2e4" />
            <path d="M4 3v2.500M4 6v1" stroke="#222" />
          </svg>
        </div>
      </div>
      <PanelTabs tabs={[]} />
      <div className="flex h-[15px] items-center justify-end gap-[4px] bg-[#535153] pr-[4px]">
        <DarkSelect label="库" value="" className="w-[50px]" />
        <span className="flex size-[10px] items-center justify-center bg-[#343234]">
          <Icon className="size-[8px] text-[#e4e2e4]">
            <path d="M1 1h4v4H1zM7 1h4v4H7zM1 7h4v4H1zM7 7h4v4H7z" fill="currentColor" stroke="none" />
          </Icon>
        </span>
        <Icon className="size-[8px]">
          <path d="M1 2h10M1 5h10M1 8h10M1 11h10" strokeWidth="2" />
        </Icon>
      </div>
      <div className="flex-1 bg-[#484648] pt-[204px] pl-[84px] text-[6px] whitespace-nowrap text-[#aaa8aa]">ies 时出现间</div>
      <div className="flex h-[12px] items-center justify-end gap-[4px] border-t border-[#363436] bg-[#535153] pr-[7px]">
        <Icon className="size-[9px]">{ICONS.si}</Icon>
        <Icon className="size-[9px]">{ICONS.palette}</Icon>
        <Icon className="size-[8px] text-[#8b898b]">{ICONS.trash}</Icon>
      </div>
    </div>
  </aside>
);

const StatusBar = () => (
  <footer className="flex h-[9px] shrink-0 items-center bg-[#3f3d3f] text-[6px] leading-none text-[#dddbdd]">
    <span className="w-[26px] pl-[6px]">100%</span>
    <span className="flex h-full w-[105px] items-center border-l border-[#2e2c2e] bg-[#4f4d4f]">
      <Icon className="mr-[20px] size-[7px]">{ICONS.share}</Icon>
      文档:1.83M/0 字节
      <svg viewBox="0 0 3 4" className="mr-[2px] ml-auto h-[5px] w-[4px] fill-current">
        <path d="M0 0l3 2-3 2z" />
      </svg>
    </span>
  </footer>
);

const Watermark = () => (
  <div className="absolute right-[55px] bottom-[20px] w-[177px] text-[#cbc9cb]">
    <div className="flex h-[56px] items-end justify-between">
      <span className="font-['Liberation_Sans',sans-serif] text-[38px] leading-[32px] font-bold">Bai</span>
      <span className="relative block h-[56px] w-[52px]">
        <svg viewBox="0 0 52 56" className="size-full fill-current">
          <ellipse cx="7" cy="21" rx="6.500" ry="8" transform="rotate(-8 7 21)" />
          <ellipse cx="19.500" cy="8.500" rx="6" ry="8.500" />
          <ellipse cx="35" cy="9.500" rx="6.500" ry="8.500" transform="rotate(12 35 9.500)" />
          <ellipse cx="45" cy="25" rx="6.500" ry="8" transform="rotate(8 45 25)" />
          <path d="M26 23c9 0 10 9 16 14 8 7 6 18-3 18-6 0-8-1-13-1s-7 1-13 1C3 55 1 44 9 37c7-5 8-14 17-14z" />
        </svg>
        <span className="absolute inset-x-0 bottom-[6px] text-center font-['Liberation_Sans',sans-serif] text-[26px] leading-[20px] text-[#434144]">
          du
        </span>
      </span>
      <span className="mb-[4px] font-['Noto_Sans_CJK_SC',sans-serif] text-[30px] leading-[30px] font-bold">经验</span>
    </div>
    <p className="font-['Open_Sans',sans-serif] text-[21px] leading-[30px] text-[#dedcde]">jingyan.baidu.com</p>
  </div>
);

const SpeedMeter = () => (
  <div className="absolute top-[410px] right-0 flex items-center text-[#e6e8ee]">
    <div className="-mr-3 h-[23px] w-[43px] rounded-l-full bg-[#242837] py-[2px] pl-[5px] text-[6px] leading-[10px] whitespace-nowrap">
      <p className="flex items-center gap-[3px]">
        <span className="size-[3px] rounded-full bg-[#4aa8e0]" />
        <span>
          0.3<span className="text-[#8b8fa0]">K/s</span>
        </span>
      </p>
      <p className="flex items-center gap-[3px]">
        <span className="size-[3px] rounded-full bg-[#3cb54a]" />
        <span>
          0.2<span className="text-[#8b8fa0]">K/s</span>
        </span>
      </p>
    </div>
    <div className="relative size-[29px]">
      <svg viewBox="0 0 30 30" fill="none" strokeWidth="1.500" className="size-full">
        <circle cx="15" cy="15" r="14" fill="#2f3444" stroke="#3c4254" />
        <path d="M15 2a13 13 0 0113 13" stroke="#4db6ac" />
        <path d="M28 15a13 13 0 01-20 11" stroke="#9ccc65" />
        <path d="M8 26a13 13 0 01-6-11" stroke="#d4b45a" />
        <path d="M2 15a13 13 0 012-7" stroke="#c0655f" />
      </svg>
      <span className="absolute inset-0 flex items-center justify-center text-[13px] leading-none">
        84<span className="pt-1 text-[6px]">%</span>
      </span>
    </div>
  </div>
);

export default function App() {
  return (
    <div
      lang="zh-CN"
      className="relative flex h-screen w-full flex-col overflow-hidden bg-[#2a282b] font-['Open_Sans','Noto_Sans_CJK_SC',sans-serif]"
    >
      <Header />
      <div className="flex min-h-0 flex-1">
        <div className="flex min-w-0 flex-1 flex-col">
          <DocumentTabs />
          <main className="relative flex min-h-0 flex-1">
            <div className="flex flex-1 items-center justify-center">
              <div className="size-[418px] bg-white" />
            </div>
            <div className="w-[9px] bg-[#3a383a]" />
            <Toolbox />
          </main>
          <StatusBar />
        </div>
        <Dock />
      </div>

      <CharacterPanel />
      <HistoryPanel />
      <LayersPanel />
      <NewDocumentDialog />
      <Watermark />
      <SpeedMeter />
    </div>
  );
}
